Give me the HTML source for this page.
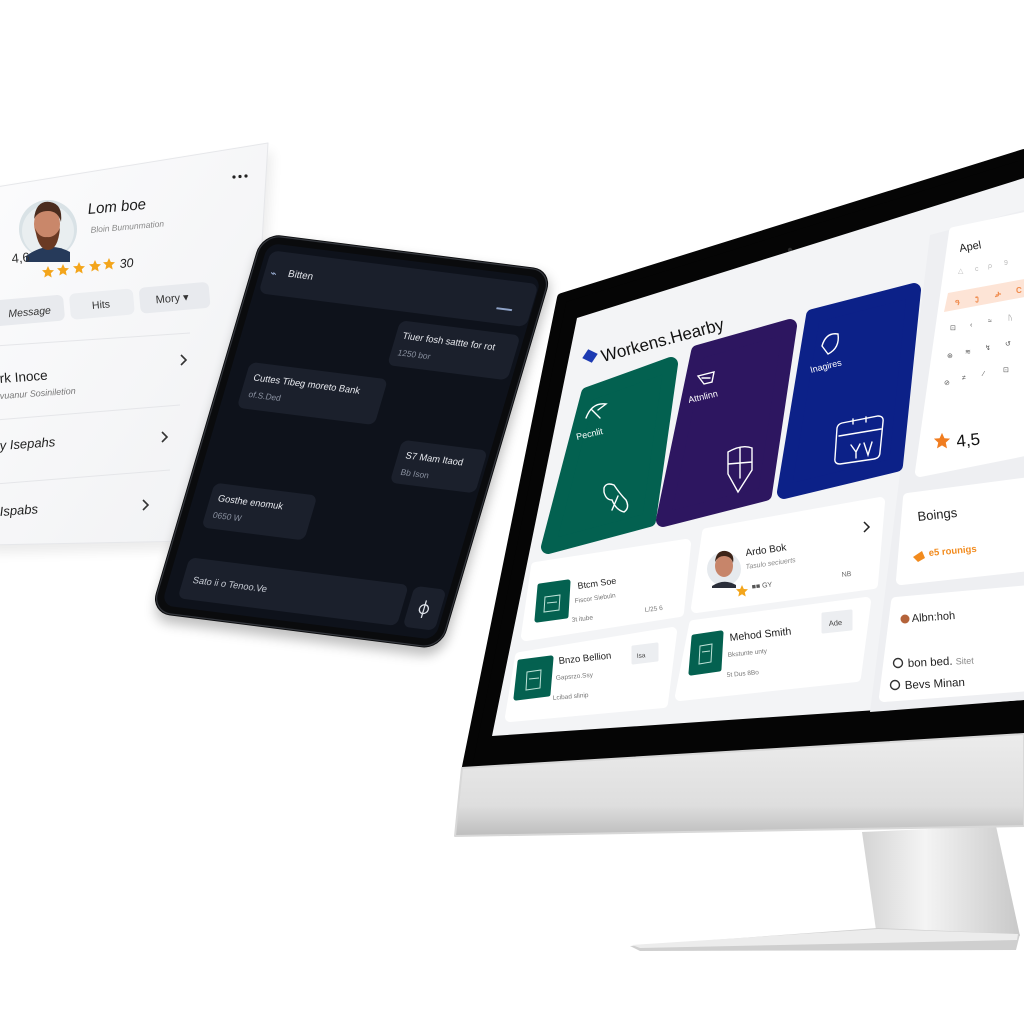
<!DOCTYPE html>
<html><head><meta charset="utf-8"><style>
html,body{margin:0;padding:0;background:#fff;width:1024px;height:1024px;overflow:hidden}
svg{display:block}
text{font-family:"Liberation Sans",sans-serif}
</style></head><body>
<svg width="1024" height="1024" viewBox="0 0 1024 1024" xmlns="http://www.w3.org/2000/svg">
<defs>
<linearGradient id="chin" x1="0" y1="0" x2="0" y2="1"><stop offset="0" stop-color="#ececec"/><stop offset="0.7" stop-color="#dedede"/><stop offset="1" stop-color="#bdbdbd"/></linearGradient>
<linearGradient id="neck" x1="0" y1="0" x2="1" y2="0"><stop offset="0" stop-color="#d4d4d4"/><stop offset="0.4" stop-color="#f4f4f4"/><stop offset="1" stop-color="#c8c8c8"/></linearGradient>
<linearGradient id="cardg" x1="0" y1="0" x2="1" y2="1"><stop offset="0" stop-color="#fcfcfd"/><stop offset="1" stop-color="#f0f1f3"/></linearGradient>
<path id="st" d="M0,-6 L1.8,-2 L6,-1.8 L2.8,1.2 L3.7,5.5 L0,3.2 L-3.7,5.5 L-2.8,1.2 L-6,-1.8 L-1.8,-2 Z"/>
<filter id="sh" x="-20%" y="-20%" width="140%" height="140%"><feGaussianBlur stdDeviation="6"/></filter>
</defs>

<!-- LEFT PROFILE CARD -->
<polygon points="-10,196 272,151 250,548 -10,553" fill="#000" opacity="0.08" filter="url(#sh)"/>
<polygon points="-10,188 268,143 244,540 -10,545" fill="url(#cardg)" stroke="#e6e7ea" stroke-width="1" stroke-linejoin="round"/>
<g fill="#222"><circle cx="234" cy="177" r="1.6"/><circle cx="240" cy="176.5" r="1.6"/><circle cx="246" cy="176" r="1.6"/></g>
<circle cx="48" cy="229" r="29" fill="#d9e2e6"/>
<circle cx="48" cy="231" r="26" fill="#e9eef0"/>
<path d="M26,256 Q48,240 70,252 L70,262 L26,262Z" fill="#263a5a"/>
<ellipse cx="47" cy="224" rx="13" ry="17" fill="#c9876a"/>
<path d="M34,219 Q36,200 50,202 Q63,204 61,222 Q58,211 48,211 Q38,211 34,219Z" fill="#4a2c1e"/>
<path d="M35,228 Q38,250 48,250 Q58,250 60,228 Q55,238 47,237 Q39,238 35,228Z" fill="#6a3a24"/>
<g transform="rotate(-5 88 212)"><text x="88" y="214" font-size="15" fill="#1a1a1a" font-style="italic">Lom boe</text>
<text x="89" y="233" font-size="8.5" fill="#888" font-style="italic">Bloin Bumunmation</text></g>
<text x="12" y="263" font-size="13" fill="#333" transform="rotate(-5 12 263)">4,6</text>
<g fill="#f3a51b"><use href="#st" x="48" y="272"/><use href="#st" x="63" y="270"/><use href="#st" x="79" y="268"/><use href="#st" x="95" y="266"/><use href="#st" x="109" y="264"/></g>
<text x="120" y="268" font-size="12.5" fill="#222" font-style="italic" transform="rotate(-5 120 268)">30</text>
<g transform="rotate(-5 0 310)">
<rect x="-8" y="300" width="72" height="26" rx="6" fill="#e8eaee"/>
<rect x="70" y="300" width="64" height="26" rx="6" fill="#eceef1"/>
<rect x="140" y="300" width="70" height="26" rx="6" fill="#e8eaee"/>
<text x="8" y="318" font-size="10.5" fill="#333" font-style="italic">Message</text>
<text x="92" y="317" font-size="10.5" fill="#333">Hits</text>
<text x="156" y="317" font-size="11" fill="#333">Mory ▾</text>
</g>
<line x1="-5" y1="346" x2="190" y2="333" stroke="#e5e6e9"/>
<text x="0" y="383" font-size="13.5" fill="#1f1f1f" transform="rotate(-4 0 383)">rk Inoce</text>
<text x="0" y="399" font-size="9" fill="#777" font-style="italic" transform="rotate(-4 0 399)">vuanur Sosiniletion</text>
<path d="M181,355 L186,360 L181,365" fill="none" stroke="#333" stroke-width="1.6"/>
<line x1="-5" y1="420" x2="180" y2="405" stroke="#e5e6e9"/>
<text x="0" y="450" font-size="13" fill="#1f1f1f" font-style="italic" transform="rotate(-4 0 450)">y Isepahs</text>
<path d="M162,432 L167,437 L162,442" fill="none" stroke="#333" stroke-width="1.6"/>
<line x1="-5" y1="484" x2="170" y2="470" stroke="#e5e6e9"/>
<text x="0" y="516" font-size="13" fill="#1f1f1f" font-style="italic" transform="rotate(-4 0 516)">Ispabs</text>
<path d="M143,500 L148,505 L143,510" fill="none" stroke="#333" stroke-width="1.6"/>

<!-- TABLET -->
<g transform="matrix(0.97,0.123,-0.287,0.974,262,233)">
<rect x="3" y="6" width="300" height="392" rx="20" fill="#000" opacity="0.25" filter="url(#sh)"/>
<rect x="0" y="0" width="300" height="390" rx="20" fill="#0a0b0d"/>
<rect x="1.5" y="1.5" width="297" height="387" rx="19" fill="none" stroke="#33363c" stroke-width="1.2"/>
<rect x="9" y="9" width="282" height="372" rx="12" fill="#0e121b"/>
<rect x="14" y="16" width="276" height="44" rx="8" fill="#1a1f2b"/>
<text x="20" y="42" font-size="11" fill="#9fb3d8">⌁</text>
<text x="38" y="40" font-size="10" fill="#e6e8ee">Bitten</text>
<rect x="255" y="44" width="16" height="2" fill="#8fa3c8"/>
<rect x="163" y="69" width="124" height="46" rx="7" fill="#1b202c"/>
<text x="170" y="87" font-size="9.5" fill="#e8eaef">Tiuer fosh sattte for rot</text>
<text x="170" y="104" font-size="8.5" fill="#8a91a0">1250 bor</text>
<rect x="26" y="129" width="142" height="47" rx="7" fill="#1b202c"/>
<text x="34" y="147" font-size="9.5" fill="#e8eaef">Cuttes Tibeg moreto Bank</text>
<text x="34" y="164" font-size="8.5" fill="#8a91a0">of.S.Ded</text>
<rect x="200" y="187" width="88" height="44" rx="7" fill="#1b202c"/>
<text x="208" y="205" font-size="9.5" fill="#e8eaef">S7 Mam Itaod</text>
<text x="208" y="222" font-size="8.5" fill="#8a91a0">Bb Ison</text>
<rect x="26" y="253" width="106" height="46" rx="7" fill="#1b202c"/>
<text x="34" y="271" font-size="9.5" fill="#e8eaef">Gosthe enomuk</text>
<text x="34" y="288" font-size="8.5" fill="#8a91a0">0650 W</text>
<rect x="23" y="330" width="226" height="42" rx="7" fill="#1b202c"/>
<text x="33" y="355" font-size="9.5" fill="#c8ccd5">Sato ii o Tenoo.Ve</text>
<rect x="255" y="330" width="33" height="42" rx="7" fill="#1b202c"/>
<circle cx="271" cy="352" r="4.5" fill="none" stroke="#dfe3ea" stroke-width="1.3"/>
<line x1="271" y1="343" x2="271" y2="361" stroke="#dfe3ea" stroke-width="1.3"/>
</g>

<!-- MONITOR -->
<polygon points="862,832 996,826 1020,936 876,930" fill="url(#neck)"/>
<polygon points="630,946 878,928 1020,934 1016,950 640,951" fill="#cfcfcf"/>
<polygon points="632,945 878,929 1018,934 1017,940 640,948" fill="#ececec"/>
<polygon points="562,298 1024,154 1024,742 466,772" fill="#050505" stroke="#050505" stroke-width="10" stroke-linejoin="round"/>
<circle cx="790" cy="250" r="2.2" fill="#2a2a2a"/>
<polygon points="577,318 1024,178 1024,700 492,736" fill="#f3f4f6"/>
<polygon points="930,235 1024,210 1024,700 870,712" fill="#eeeff2"/>
<polygon points="462,768 1024,734 1024,826 455,836" fill="url(#chin)" stroke="#d8d8d8" stroke-width="2" stroke-linejoin="round"/>

<!-- title -->
<path d="M582,356 L590,349 L598,356 L590,363Z" fill="#1d3bb3" transform="rotate(-15 590 356)"/>
<text x="603" y="362" font-size="17" fill="#111" transform="rotate(-15 603 362)">Workens.Hearby</text>

<!-- colored cards -->
<polygon points="588,394 671,364 649,520 548,547" fill="#036150" stroke="#036150" stroke-width="14" stroke-linejoin="round"/>
<polygon points="698,352 790,326 765,494 663,520" fill="#2d1660" stroke="#2d1660" stroke-width="14" stroke-linejoin="round"/>
<polygon points="813,316 914,290 896,465 784,492" fill="#0c2188" stroke="#0c2188" stroke-width="14" stroke-linejoin="round"/>
<g fill="none" stroke="#fff" stroke-width="1.4" stroke-linecap="round">
<path d="M586,418 Q592,402 606,404 L598,410 M592,410 L600,418"/>
<path d="M604,488 Q606,482 614,485 Q620,494 626,500 Q630,508 624,512 Q616,510 612,500 Q606,500 604,492Z M618,496 L612,510"/>
<path d="M698,376 L714,372 L712,382 L704,384Z M702,378 L710,378"/>
<path d="M728,452 Q742,444 752,448 L752,470 L738,492 L728,474Z M740,448 L740,478 M728,464 L752,462"/>
<path d="M822,346 Q826,332 838,334 Q840,348 828,354Z"/>
<path d="M842,423 L878,416 Q884,416 883,422 L880,452 Q880,458 874,459 L840,464 Q834,464 835,458 L837,428 Q838,424 842,423Z M839,436 L881,429 M853,419 L853,424 M866,417 L866,422 M851,445 L856,452 L860,444 M856,452 L856,458 M864,443 L868,455 L872,442"/>
</g>
<text x="577" y="440" font-size="9" fill="#fff" transform="rotate(-13 577 440)">Pecnlit</text>
<text x="689" y="403" font-size="9" fill="#fff" transform="rotate(-13 689 403)">Attnlinn</text>
<text x="811" y="373" font-size="9" fill="#fff" transform="rotate(-14 811 373)">Inagires</text>

<!-- white cards -->
<g fill="#fff" stroke="#fff" stroke-width="10" stroke-linejoin="round">
<polygon points="707,533 880,502 873,584 696,608"/>
<polygon points="536,567 686,544 679,612 526,636"/>
<polygon points="694,625 866,602 856,677 680,696"/>
<polygon points="520,657 672,632 663,703 510,717"/>
<polygon points="954,232 1030,216 1030,450 920,472"/>
<polygon points="908,498 1030,482 1030,566 901,580"/>
<polygon points="896,602 1030,590 1030,686 884,697"/>
</g>

<!-- Ardo Bok -->
<circle cx="724" cy="569" r="17" fill="#e6eaee"/>
<ellipse cx="724" cy="566" rx="9" ry="11" fill="#c7856a"/>
<path d="M715,562 Q716,550 726,551 Q735,553 733,563 Q731,556 724,556 Q718,556 715,562Z" fill="#3d2418"/>
<path d="M712,586 Q724,578 736,585 L736,588 L712,588Z" fill="#2b2f3a"/>
<text x="746" y="556" font-size="10" fill="#1c1c1c" transform="rotate(-8 746 556)">Ardo Bok</text>
<text x="746" y="569" font-size="7" fill="#888" font-style="italic" transform="rotate(-8 746 569)">Tasulo seciuerts</text>
<use href="#st" x="742" y="591" fill="#f3a51b"/>
<text x="752" y="589" font-size="7" fill="#555" transform="rotate(-7 752 589)">■■  GY</text>
<text x="842" y="577" font-size="7" fill="#666" transform="rotate(-7 842 577)">NB</text>
<path d="M864,522 L869,527 L864,532" fill="none" stroke="#222" stroke-width="1.5"/>
<!-- Btcm Soe -->
<polygon points="540,586 568,582 566,616 537,620" fill="#046150" stroke="#046150" stroke-width="5" stroke-linejoin="round"/>
<path d="M545,597 L560,595 L559,610 L544,612Z M547,603 L557,602" fill="none" stroke="#bfe3d8" stroke-width="1"/>
<text x="578" y="589" font-size="9" fill="#1c1c1c" transform="rotate(-8 578 589)">Btcm Soe</text>
<text x="575" y="603" font-size="6.5" fill="#777" transform="rotate(-8 575 603)">Fiscor Siebuln</text>
<text x="572" y="622" font-size="6.5" fill="#777" transform="rotate(-7 572 622)">3t itube</text>
<text x="645" y="612" font-size="6.5" fill="#777" transform="rotate(-7 645 612)">L/25 6</text>
<!-- Mehod Smith -->
<polygon points="694,637 721,633 719,669 691,673" fill="#046150" stroke="#046150" stroke-width="5" stroke-linejoin="round"/>
<path d="M700,646 L712,644 L711,662 L699,664Z M702,652 L710,651" fill="none" stroke="#bfe3d8" stroke-width="1"/>
<text x="730" y="641" font-size="10.5" fill="#1c1c1c" transform="rotate(-6 730 641)">Mehod Smith</text>
<text x="728" y="657" font-size="6.5" fill="#777" transform="rotate(-6 728 657)">Bkstunte unty</text>
<text x="727" y="677" font-size="6.5" fill="#777" transform="rotate(-5 727 677)">5t Dus 8Bo</text>
<polygon points="823,614 851,611 851,629 823,632" fill="#eceef1" stroke="#eceef1" stroke-width="3" stroke-linejoin="round"/>
<text x="829" y="626" font-size="7.5" fill="#444" transform="rotate(-5 829 626)">Ade</text>
<!-- Bnzo Bellion -->
<polygon points="520,662 551,658 548,694 516,698" fill="#046150" stroke="#046150" stroke-width="5" stroke-linejoin="round"/>
<path d="M527,672 L541,670 L540,688 L526,690Z M529,679 L539,678" fill="none" stroke="#bfe3d8" stroke-width="1"/>
<text x="559" y="664" font-size="9.5" fill="#1c1c1c" transform="rotate(-6 559 664)">Bnzo Bellion</text>
<text x="556" y="680" font-size="6.5" fill="#777" transform="rotate(-5 556 680)">Gapsrzo.Ssy</text>
<text x="553" y="700" font-size="6.5" fill="#777" transform="rotate(-5 553 700)">Lcibad slinip</text>
<polygon points="633,647 657,644 657,660 633,663" fill="#eceef1" stroke="#eceef1" stroke-width="3" stroke-linejoin="round"/>
<text x="637" y="658" font-size="6.5" fill="#444" transform="rotate(-5 637 658)">Isa</text>

<!-- right column -->
<text x="960" y="252" font-size="11" fill="#1c1c1c" transform="rotate(-10 960 252)">Apel</text>
<polygon points="948,293 1030,278 1030,296 944,312" fill="#fde4d6"/>
<g font-size="7" fill="#bbb"><text x="958" y="273">△</text><text x="975" y="271">c</text><text x="988" y="268">ρ</text><text x="1004" y="265">9</text></g>
<g font-size="8" fill="#f08a4b" font-weight="bold"><text x="955" y="305">ዓ</text><text x="975" y="301">ງ</text><text x="995" y="297">ታ</text><text x="1016" y="293">C</text></g>
<g font-size="7" fill="#555"><text x="950" y="330">⊡</text><text x="970" y="327">‹</text><text x="988" y="323">≈</text><text x="1008" y="320">ᚢ</text>
<text x="947" y="358">⊛</text><text x="965" y="354">≋</text><text x="985" y="350">↯</text><text x="1005" y="346">↺</text>
<text x="944" y="385">⊘</text><text x="962" y="380">≠</text><text x="983" y="376">⁄</text><text x="1003" y="372">⊡</text></g>
<g transform="translate(942 441) scale(1.35)"><use href="#st" fill="#f07d20"/></g>
<text x="957" y="447" font-size="17" fill="#111" transform="rotate(-6 957 447)">4,5</text>
<text x="918" y="521" font-size="13" fill="#222" transform="rotate(-6 918 521)">Boings</text>
<path d="M913,557 L922,551 L925,558 L918,562Z" fill="#f28b1e"/>
<text x="929" y="556" font-size="9.5" fill="#f28b1e" font-weight="bold" transform="rotate(-5 929 556)">e5 rounigs</text>
<circle cx="905" cy="619" r="4.5" fill="#b4633a"/>
<text x="912" y="622" font-size="11" fill="#222" transform="rotate(-4 912 622)">Albn:hoh</text>
<circle cx="898" cy="663" r="4.5" fill="none" stroke="#333" stroke-width="1.4"/>
<text x="908" y="667" font-size="11.5" fill="#222" transform="rotate(-3 908 667)">bon bed. <tspan fill="#888" font-size="9">Sitet</tspan></text>
<circle cx="895" cy="685" r="4.5" fill="none" stroke="#333" stroke-width="1.4"/>
<text x="905" y="689" font-size="11.5" fill="#222" transform="rotate(-3 905 689)">Bevs Minan</text>
</svg>
</body></html>
